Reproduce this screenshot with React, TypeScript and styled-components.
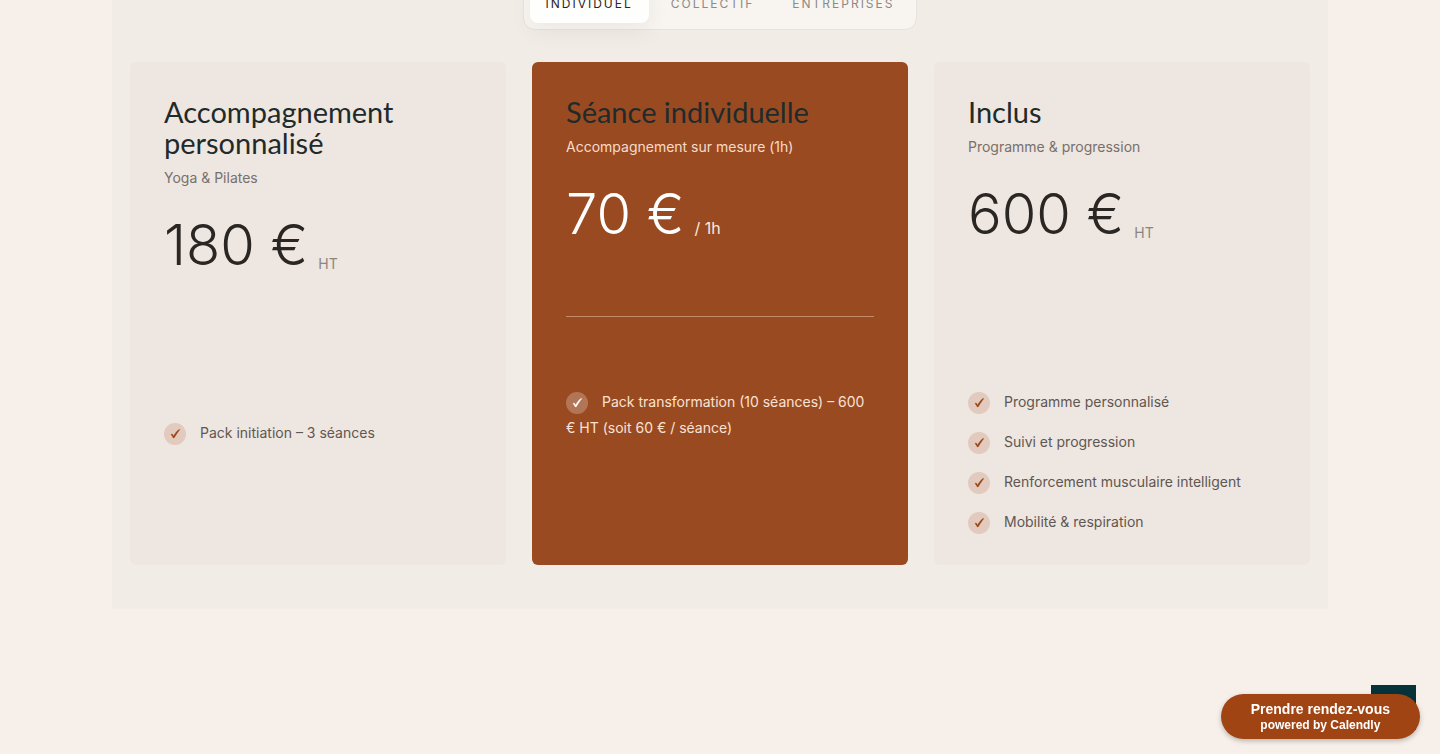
import React, { useState } from "react";
import styled, { createGlobalStyle } from "styled-components";

const GlobalStyle = createGlobalStyle`
  *, *::before, *::after { box-sizing: border-box; }
  body {
    margin: 0;
    background: #f7f0ea;
    color: #2a2623;
    font-family: Inter, "Liberation Sans", sans-serif;
    overflow: hidden;
  }
`;

const Page = styled.main`
  padding: 0 24px 120px;
  margin-top: -40px;
`;

const Panel = styled.section`
  max-width: 1216px;
  margin: 0 auto;
  padding: 18px 18px 44px;
  background: #f1ece6;
`;

const Tabs = styled.div`
  display: flex;
  gap: 6px;
  width: fit-content;
  margin: 0 auto 32px;
  padding: 6px;
  border: 1px solid #e6e2dd;
  border-radius: 12px;
  background: #f8f5f1;
`;

const Tab = styled.button<{ $active: boolean }>`
  height: 38px;
  padding: 0 16px;
  border: 0;
  border-radius: 8px;
  background: ${(p) => (p.$active ? "#fefefd" : "transparent")};
  box-shadow: ${(p) => (p.$active ? "0 8px 24px rgba(40, 30, 20, 0.06)" : "none")};
  color: ${(p) => (p.$active ? "#2a2623" : "#8d8985")};
  font: 400 12px/18px Inter, sans-serif;
  letter-spacing: 2px;
  text-transform: uppercase;
  cursor: pointer;
`;

const Cards = styled.div`
  display: grid;
  grid-template-columns: repeat(3, 1fr);
  gap: 26px;
`;

const Card = styled.article<{ $featured?: boolean }>`
  padding: 34px 34px 30px;
  border-radius: 6px;
  background: ${(p) => (p.$featured ? "#9a4a21" : "#eee6e0")};
  --sub: ${(p) => (p.$featured ? "#f5dccb" : "#78706a")};
  --price: ${(p) => (p.$featured ? "#ffffff" : "#2a2623")};
  --unit: ${(p) => (p.$featured ? "#fbe9dd" : "#8d857f")};
  --rule: ${(p) => (p.$featured ? "#c28b6c" : "transparent")};
  --item: ${(p) => (p.$featured ? "#f9e2d3" : "#5f5751")};
  --tick: ${(p) => (p.$featured ? "#ffffff" : "#9a4414")};
  --disc: ${(p) => (p.$featured ? "#b27657" : "#e2cabe")};
`;

const Title = styled.h3`
  margin: 0 0 8px;
  color: #1f2b2a;
  font: 400 29px/31px Lato, sans-serif;
`;

const Subtitle = styled.p`
  margin: 0 0 27px;
  color: var(--sub);
  font-size: 14px;
  line-height: 24px;
`;

const PriceRow = styled.div<{ $baseline?: boolean }>`
  display: flex;
  align-items: ${(p) => (p.$baseline ? "baseline" : "flex-end")};
  gap: 10px;
  height: 56px;
`;

const Price = styled.span`
  color: var(--price);
  font-size: 56px;
  font-weight: 300;
  line-height: 56px;
`;

const Unit = styled.span<{ $large?: boolean }>`
  color: var(--unit);
  font-size: ${(p) => (p.$large ? 16 : 14)}px;
  line-height: 18px;
`;

const Rule = styled.hr`
  height: 1px;
  margin: 74px 0 72px;
  border: 0;
  background: var(--rule);
`;

const List = styled.ul`
  display: flex;
  flex-direction: column;
  gap: 14px;
  margin: 0;
  padding: 0;
  list-style: none;
`;

const Item = styled.li`
  color: var(--item);
  font-size: 14px;
  line-height: 26px;
`;

const Disc = styled.span`
  display: inline-flex;
  align-items: center;
  justify-content: center;
  width: 22px;
  height: 22px;
  margin-right: 14px;
  border-radius: 50%;
  background: var(--disc);
  vertical-align: middle;
`;

const BackToTop = styled.a`
  position: fixed;
  right: 24px;
  bottom: 24px;
  width: 45px;
  height: 45px;
  background: #06333a;
`;

const Booking = styled.button`
  position: fixed;
  right: 20px;
  bottom: 15px;
  display: flex;
  flex-direction: column;
  align-items: center;
  justify-content: center;
  height: 45px;
  padding: 0 30px;
  border: 0;
  border-radius: 25px;
  background: #a04414;
  box-shadow: 0 2px 5px rgba(0, 0, 0, 0.25);
  color: #ffffff;
  font: 700 14px/16px "Liberation Sans", Arial, sans-serif;
  cursor: pointer;
`;

const BookingNote = styled.span`
  font-size: 12px;
`;

const Tick = () => (
  <Disc>
    <svg width="12" height="12" viewBox="0 0 12 12" aria-hidden="true">
      <path
        d="M2 6.4C2.700 5.700 3.600 5.900 4 6.800L4.600 8C6 5.200 7.800 3 10.300 1.300L10.900 1.700C8.900 4 7.200 6.600 5.400 9.800L4.200 10.100C3.500 8.800 2.900 7.500 2 6.400Z"
        fill="var(--tick)"
        stroke="var(--tick)"
        strokeWidth="0.2"
        strokeLinejoin="round"
      />
    </svg>
  </Disc>
);

interface Offer {
  title: string;
  subtitle: string;
  price: string;
  unit: string;
  items: string[];
  featured?: boolean;
}

const offers: Offer[] = [
  {
    title: "Accompagnement personnalisé",
    subtitle: "Yoga & Pilates",
    price: "180 €",
    unit: "HT",
    items: ["Pack initiation – 3 séances"],
  },
  {
    title: "Séance individuelle",
    subtitle: "Accompagnement sur mesure (1h)",
    price: "70 €",
    unit: "/ 1h",
    items: ["Pack transformation (10 séances) – 600 € HT (soit 60 € / séance)"],
    featured: true,
  },
  {
    title: "Inclus",
    subtitle: "Programme & progression",
    price: "600 €",
    unit: "HT",
    items: [
      "Programme personnalisé",
      "Suivi et progression",
      "Renforcement musculaire intelligent",
      "Mobilité & respiration",
    ],
  },
];

const tabs = ["Individuel", "Collectif", "Entreprises"];

export default function App() {
  const [active, setActive] = useState(0);
  return (
    <>
      <GlobalStyle />
      <Page>
        <Panel>
          <Tabs role="tablist">
            {tabs.map((label, i) => (
              <Tab
                key={label}
                type="button"
                role="tab"
                aria-selected={i === active}
                $active={i === active}
                onClick={() => setActive(i)}
              >
                {label}
              </Tab>
            ))}
          </Tabs>
          <Cards>
            {offers.map((o) => (
              <Card key={o.title} $featured={o.featured}>
                <Title>{o.title}</Title>
                <Subtitle>{o.subtitle}</Subtitle>
                <PriceRow $baseline={o.featured}>
                  <Price>{o.price}</Price>
                  <Unit $large={o.featured}>{o.unit}</Unit>
                </PriceRow>
                <Rule />
                <List>
                  {o.items.map((item) => (
                    <Item key={item}>
                      <Tick />
                      {item}
                    </Item>
                  ))}
                </List>
              </Card>
            ))}
          </Cards>
        </Panel>
      </Page>
      <BackToTop href="#" aria-label="Haut de page" />
      <Booking type="button">
        Prendre rendez-vous
        <BookingNote>powered by Calendly</BookingNote>
      </Booking>
    </>
  );
}
